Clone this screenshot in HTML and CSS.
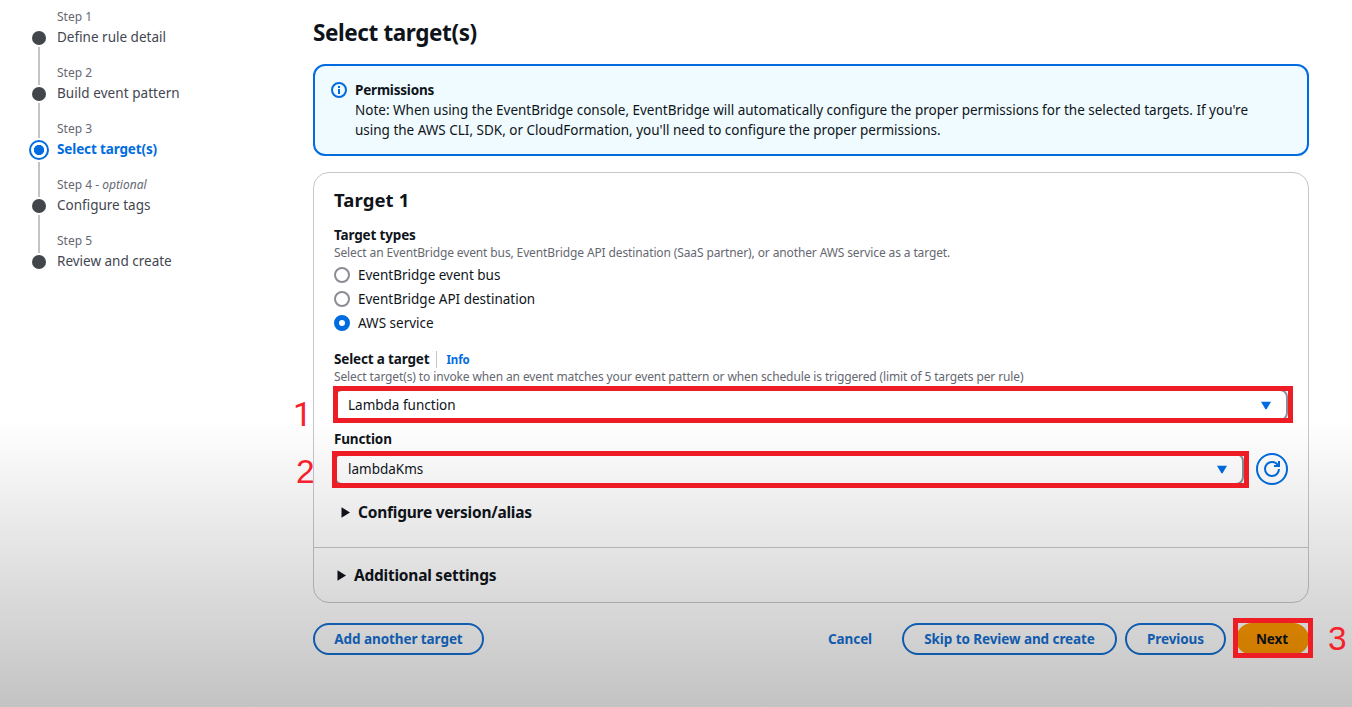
FILE: index.html
```html
<!DOCTYPE html>
<html lang="en">
<head>
<meta charset="utf-8">
<title>Select target(s)</title>
<link rel="stylesheet" href="styles.css">
</head>
<body>
<div class="page">
  <nav class="steps">
    <div class="step"><div class="rail"><i class="dot"></i><i class="line"></i></div><div class="step-text"><span class="step-no">Step 1</span><span class="step-name">Define rule detail</span></div></div>
    <div class="step"><div class="rail"><i class="dot"></i><i class="line before-active"></i></div><div class="step-text"><span class="step-no">Step 2</span><span class="step-name wide">Build event pattern</span></div></div>
    <div class="step active"><div class="rail"><i class="dot"></i><i class="line"></i></div><div class="step-text"><span class="step-no">Step 3</span><span class="step-name">Select target(s)</span></div></div>
    <div class="step"><div class="rail"><i class="dot"></i><i class="line"></i></div><div class="step-text"><span class="step-no">Step 4 - <em>optional</em></span><span class="step-name">Configure tags</span></div></div>
    <div class="step"><div class="rail"><i class="dot"></i></div><div class="step-text"><span class="step-no">Step 5</span><span class="step-name">Review and create</span></div></div>
  </nav>
  <main class="main">
    <h1 class="title">Select target(s)</h1>
    <section class="alert">
      <svg class="info-icon" viewBox="0 0 16 16" fill="none" stroke="#006ce0" stroke-width="2"><circle cx="8" cy="8" r="7"/><path d="M8 12V7M8 6V4"/></svg>
      <div>
        <div class="alert-head">Permissions</div>
        <div class="alert-body">Note: When using the EventBridge console, EventBridge will automatically configure the proper permissions for the selected targets. If you're<br>using the AWS CLI, SDK, or CloudFormation, you'll need to configure the proper permissions.</div>
      </div>
    </section>
    <section class="card">
      <div class="card-body">
        <h2 class="card-title">Target 1</h2>
        <div class="label types">Target types</div>
        <div class="hint">Select an EventBridge event bus, EventBridge API destination (SaaS partner), or another AWS service as a target.</div>
        <div class="radios">
          <div class="radio"><i class="knob"></i><span>EventBridge event bus</span></div>
          <div class="radio"><i class="knob"></i><span>EventBridge API destination</span></div>
          <div class="radio"><i class="knob on"></i><span>AWS service</span></div>
        </div>
        <div class="label target-label"><span>Select a target</span><a class="info">Info</a></div>
        <div class="hint">Select target(s) to invoke when an event matches your event pattern or when schedule is triggered (limit of 5 targets per rule)</div>
        <div class="select first"><span>Lambda function</span><svg class="caret" viewBox="0 0 12 9"><path d="M1 .7h10L6.6 8.2h-1.200z"/></svg></div>
        <div class="label function-label">Function</div>
        <div class="function-row">
          <div class="select"><span>lambdaKms</span><svg class="caret" viewBox="0 0 12 9"><path d="M1 .7h10L6.6 8.2h-1.200z"/></svg></div>
          <div class="refresh"><svg viewBox="0 0 16 16" fill="none" stroke="#006ce0" stroke-width="2"><path d="M15 8c0 3.870-3.130 7-7 7s-7-3.130-7-7 3.130-7 7-7c2.790 0 5.200 1.630 6.330 4"/><path d="M10 5h5V0"/></svg></div>
        </div>
        <div class="expander inner"><svg viewBox="0 0 9 11"><path d="M.5 .2 9 5.500.5 10.800z"/></svg><span>Configure version/alias</span></div>
      </div>
      <div class="card-foot">
        <div class="expander"><svg viewBox="0 0 9 11"><path d="M.5 .2 9 5.500.5 10.800z"/></svg><span>Additional settings</span></div>
      </div>
    </section>
    <div class="actions">
      <div class="btn add">Add another target</div>
      <div class="right">
        <div class="cancel">Cancel</div>
        <div class="btn skip">Skip to Review and create</div>
        <div class="btn prev">Previous</div>
        <div class="btn next">Next</div>
      </div>
    </div>
  </main>
  <div class="shade"></div>
  <div class="mark mark-1"></div>
  <div class="mark mark-2"></div>
  <div class="mark mark-3"></div>
  <div class="num num-1">1</div>
  <div class="num num-2">2</div>
  <div class="num num-3">3</div>
</div>
</body>
</html>
```
FILE: styles.css
```css
* { box-sizing: border-box; }
body { margin: 0; background: #fff; }
.page {
  position: relative; display: flex; width: 1352px; height: 707px; overflow: hidden;
  font-family: "Noto Sans", "Open Sans", sans-serif; font-size: 13.500px; line-height: 20px; color: #0f141a;
  white-space: nowrap;
}
i { display: block; }

.steps { width: 313px; padding: 9px 0 0 29px; flex: none; }
.step { display: flex; gap: 8px; height: 56px; }
.rail { width: 20px; padding-top: 22px; display: flex; flex-direction: column; align-items: center; flex: none; }
.dot { width: 14px; height: 14px; border-radius: 50%; background: #424549; flex: none; }
.line { width: 2px; height: 38px; margin-top: 2px; background: #c3c3c8; flex: none; }
.line.before-active { height: 35px; }
.active .rail { padding-top: 19px; }
.active .dot { width: 20px; height: 20px; border: 2px solid #006ce0; background: radial-gradient(circle, #006ce0 4.800px, #fff 5.400px); }
.active .line { height: 35px; }
.step-text { display: flex; flex-direction: column; align-items: flex-start; }
.step-no { font-size: 12px; line-height: 16px; color: #656871; }
.step-name { line-height: 20px; margin-top: 2px; color: #424650; }
.step-name.wide { letter-spacing: .06px; }
.active .step-name { color: #006ce0; font-weight: 700; letter-spacing: -.13px; }

.main { width: 996px; }
.title { margin: 18px 0 16px; font-size: 22.500px; line-height: 30px; font-weight: 700; letter-spacing: -.4px; }
.alert { display: flex; gap: 8px; height: 92px; padding: 14px 16px; border: 2px solid #006ce0; border-radius: 12px; background: #f0fbff; }
.info-icon { width: 16px; height: 16px; margin-top: 2px; flex: none; }
.alert-head { font-weight: 700; letter-spacing: -.2px; }
.alert-body { letter-spacing: -.007px; }

.card { height: 431px; margin-top: 16px; border: 1px solid #c6c6cd; border-radius: 16px; }
.card-body { height: 375px; padding: 15px 20px 0; border-bottom: 1px solid #c6c6cd; }
.card-title { margin: 0; font-size: 18.500px; line-height: 24px; font-weight: 700; letter-spacing: .1px; }
.label { font-weight: 700; line-height: 20px; letter-spacing: -.16px; }
.types { margin-top: 13px; }
.hint { font-size: 12px; line-height: 16px; color: #656871; letter-spacing: -.122px; }
.radios { margin-top: 4px; }
.radio { display: flex; align-items: center; gap: 8px; height: 20px; margin-bottom: 4px; }
.knob { width: 16px; height: 16px; border: 2px solid #8c8c94; border-radius: 50%; }
.knob.on { border: 5px solid #006ce0; }
.target-label { display: flex; align-items: center; margin-top: 16px; }
.info { margin-left: 7px; padding: 1px 0 0 9px; border-left: 1px solid #c6c6cd; font-size: 11.500px; line-height: 16px; letter-spacing: -.1px; color: #006ce0; }
.select { display: flex; align-items: center; justify-content: space-between; height: 32px; padding: 0 14px 0 12px; border: 2px solid #8c8c94; border-radius: 8px; background: #fff; flex: 1; }
.first { margin-top: 4px; }
.caret { width: 12px; height: 9px; fill: #006ce0; }
.function-label { margin-top: 8px; }
.function-row { display: flex; gap: 12px; margin-top: 4px; }
.refresh { display: flex; align-items: center; justify-content: center; width: 32px; height: 32px; border: 2px solid #006ce0; border-radius: 50%; }
.refresh svg { width: 16px; height: 16px; }
.expander { display: flex; align-items: center; gap: 8px; height: 20px; font-size: 15.500px; font-weight: 700; letter-spacing: -.24px; }
.expander svg { width: 9px; height: 11px; fill: #0f141a; }
.expander.inner { margin: 17px 0 0 7px; }
.card-foot { padding: 17px 0 0 23px; }

.actions { display: flex; justify-content: space-between; margin-top: 20px; font-weight: 700; letter-spacing: -.08px; color: #146fd2; }
.right { display: flex; }
.btn, .cancel { display: flex; align-items: center; justify-content: center; height: 32px; }
.btn { border: 2px solid #146fd2; border-radius: 16px; }
.add { width: 171px; }
.cancel { width: 44px; margin-right: 30px; }
.skip { width: 215px; margin-right: 8px; }
.prev { width: 101px; margin-right: 10px; }
.next { width: 73px; padding-right: 1px; border-color: #ff9900; background: #ff9900; color: #0f141a; }

.shade { position: absolute; inset: 420px 0 0; background: linear-gradient(rgba(0,0,0,0), rgba(0,0,0,.235)); }
.mark { position: absolute; border: 5px solid #ee1c25; }
.mark-1 { left: 333px; top: 386px; width: 960px; height: 37px; }
.mark-2 { left: 332px; top: 451px; width: 917px; height: 37px; }
.mark-3 { left: 1233px; top: 618px; width: 80px; height: 40px; }
.num { position: absolute; font: 33.500px/36px "Liberation Sans", Arial, sans-serif; color: #f5222d; }
.num-1 { left: 293px; top: 397px; font-family: Roboto, sans-serif; }
.num-2 { left: 296px; top: 454px; }
.num-3 { left: 1328px; top: 621px; }
```
